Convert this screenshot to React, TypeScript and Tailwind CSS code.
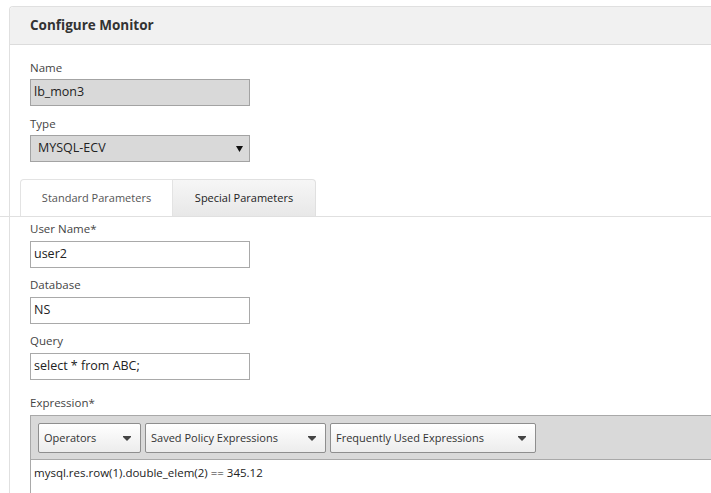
import React from 'react'

const font = { fontFamily: '"Open Sans", "Noto Sans", Arial, sans-serif' }

function Label({ children, className = '' }: { children: React.ReactNode; className?: string }) {
  return <div className={`text-[11.5px] leading-[16px] text-[#444] ${className}`}>{children}</div>
}

function TextBox({ value, disabled = false }: { value: string; disabled?: boolean }) {
  return (
    <div
      className={`w-[220px] h-[27px] border px-[3px] flex items-center text-[12.5px] text-[#222] ${
        disabled ? 'bg-[#d9d9d9] border-[#a3a3a3]' : 'bg-white border-[#a9a9a9]'
      }`}
    >
      {value}
    </div>
  )
}

function Caret() {
  return (
    <svg width="8" height="5" viewBox="0 0 8 5" className="shrink-0">
      <path d="M0 0H8V1L4 5L0 1Z" fill="#444" />
    </svg>
  )
}

function Dropdown({ label, width }: { label: string; width: string }) {
  return (
    <div
      className={`${width} h-[30px] border border-[#8e8e8e] rounded-[2px] bg-gradient-to-b from-white to-[#ececec] flex items-center justify-between pl-[5px] pr-[9px] text-[11px] text-[#333]`}
    >
      <span>{label}</span>
      <Caret />
    </div>
  )
}

export default function App() {
  return (
    <div className="w-[711px] h-[493px] bg-white overflow-hidden" style={font}>
      <div className="ml-[9px] mt-[6px] w-[720px] border-l border-t border-[#e0e0e0] rounded-tl-[4px]">
        {/* header */}
        <div className="h-[38px] bg-[#f1f1f1] border-b border-[#dcdcdc] flex items-center pl-[20px] rounded-tl-[4px]">
          <span className="text-[13.5px] font-bold text-[#333]">Configure Monitor</span>
        </div>

        <div className="pl-[20px]">
          <Label className="mt-[15px]">Name</Label>
          <div className="mt-[3px]">
            <TextBox value="lb_mon3" disabled />
          </div>
          <Label className="mt-[10px]">Type</Label>
          <div className="mt-[3px] w-[220px] h-[27px] border border-[#a3a3a3] bg-[#d9d9d9] flex items-center justify-between pl-[7px] pr-[6px] text-[12.5px] text-[#222]">
            <span>MYSQL-ECV</span>
            <svg width="7" height="6" viewBox="0 0 7 6">
              <path d="M0 0H7L3.5 6Z" fill="#111" />
            </svg>
          </div>
        </div>

        {/* tabs */}
        <div className="-ml-[10px] mt-[17px] pl-[20px] border-b border-[#e0e0e0] flex items-end h-[38px]">
          <div className="h-[37px] w-[153px] border border-b-0 border-[#e3e3e3] rounded-tl-[4px] bg-white flex items-center justify-center text-[11px] text-[#555]">
            Standard Parameters
          </div>
          <div className="h-[37px] w-[143px] border-t border-r border-[#e0e0e0] rounded-tr-[4px] bg-gradient-to-b from-[#f6f6f6] to-[#e8e8e8] flex items-center justify-center text-[11px] text-[#222]">
            Special Parameters
          </div>
        </div>

        <div className="pl-[20px]">
          <Label className="mt-[4px]">User Name*</Label>
          <div className="mt-[4px]">
            <TextBox value="user2" />
          </div>
          <Label className="mt-[9px]">Database</Label>
          <div className="mt-[4px]">
            <TextBox value="NS" />
          </div>
          <Label className="mt-[9px]">Query</Label>
          <div className="mt-[4px]">
            <TextBox value="select * from ABC;" />
          </div>
          <Label className="mt-[15px]">Expression*</Label>

          <div className="mt-[4px] border-l border-t border-[#a9a9a9] w-[681px]">
            <div className="h-[44px] bg-[#d9d9d9] border-b border-[#a9a9a9] flex items-start pt-[7px] pl-[7px] gap-[4px]">
              <Dropdown label="Operators" width="w-[103px]" />
              <Dropdown label="Saved Policy Expressions" width="w-[181px]" />
              <Dropdown label="Frequently Used Expressions" width="w-[206px]" />
            </div>
            <div className="h-[40px] bg-white pl-[3px] pt-[4px] text-[11.5px] text-[#222]">
              mysql.res.row(1).double_elem(2) == 345.12
            </div>
          </div>
        </div>
      </div>
    </div>
  )
}
